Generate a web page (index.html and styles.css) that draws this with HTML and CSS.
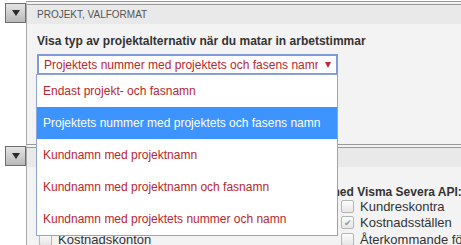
FILE: index.html
```html
<!DOCTYPE html>
<html lang="sv">
	<head>
		<meta charset="UTF-8" />
		<meta name="viewport" content="width=device-width, initial-scale=1.0" />
		<title>Inställningar</title>
		<link rel="stylesheet" href="styles.css">
	</head>
	<body>
		<div class="page">
			<div class="section">
				<div class="gutter">
					<button class="toggle"><span class="toggle-arrow"></span></button>
				</div>
				<div class="panel">
					<div class="panel-header">PROJEKT, VALFORMAT</div>
					<div class="panel-body first">
						<div class="field-label">Visa typ av projektalternativ när du matar in arbetstimmar</div>
						<div class="select-wrap">
							<div class="select">
								<span class="select-text">Projektets nummer med projektets och fasens namn</span>
								<span class="caret"></span>
							</div>
							<ul class="dropdown">
								<li class="option">Endast projekt- och fasnamn</li>
								<li class="option selected">Projektets nummer med projektets och fasens namn</li>
								<li class="option">Kundnamn med projektnamn</li>
								<li class="option">Kundnamn med projektnamn och fasnamn</li>
								<li class="option">Kundnamn med projektets nummer och namn</li>
							</ul>
						</div>
					</div>
				</div>
			</div>
			<div class="section">
				<div class="gutter">
					<button class="toggle"><span class="toggle-arrow"></span></button>
				</div>
				<div class="panel">
					<div class="panel-header">INTEGRATION</div>
					<div class="panel-body second">
						<div class="field-label">Markera vilken information som ska synkroniseras med Visma Severa API:</div>
						<div class="check-grid">
							<label class="check-item"><span class="check"></span>Kunder</label>
							<label class="check-item"><span class="check"></span>Kundreskontra</label>
							<label class="check-item"><span class="check"></span>Produkter</label>
							<label class="check-item"><span class="check checked"></span>Kostnadsställen</label>
							<label class="check-item"><span class="check"></span>Kostnadskonton</label>
							<label class="check-item"><span class="check"></span>Återkommande försäljning</label>
						</div>
					</div>
				</div>
			</div>
		</div>
	</body>
</html>
```

FILE: styles.css
```css
body {
	margin: 0;
	font-family: "Liberation Sans", Arial, sans-serif;
	background: #fff;
	color: #333;
	overflow: hidden;
}

.page {
	padding-top: 1px;
}

.section {
	display: flex;
}

.gutter {
	width: 26px;
	flex-shrink: 0;
	padding-top: 2px;
	background: #fff;
}

.toggle {
	display: flex;
	align-items: center;
	justify-content: center;
	width: 21px;
	height: 20px;
	margin-left: 5px;
	padding: 0;
	border: 1px solid #6d6d6d;
	background: linear-gradient(#e4e4e4, #b9b9b9);
	cursor: pointer;
}

.toggle-arrow {
	width: 0;
	height: 0;
	border-left: 4px solid transparent;
	border-right: 4px solid transparent;
	border-top: 6px solid #2b2b2b;
}

.panel {
	flex: 1;
	min-width: 0;
	border-left: 1px solid #a9a9a9;
	border-top: 4px double #999;
	background: #f3f3f3;
}

.panel-header {
	height: 19px;
	line-height: 19px;
	padding-left: 10px;
	background: #e9e9e9;
	font-size: 10px;
	color: #555;
}

.panel-body {
	padding: 10px 10px 0 10px;
}

.panel-body.first {
	height: 110px;
}

.panel-body.second {
	padding-top: 18px;
}

.field-label {
	font-size: 12px;
	font-weight: bold;
	color: #333;
	white-space: nowrap;
	line-height: 14px;
	margin-bottom: 6px;
}

.second .field-label {
	margin-bottom: 0;
}

.select-wrap {
	position: relative;
	width: 301px;
}

.select {
	display: flex;
	align-items: center;
	height: 17px;
	border: 2px solid #7f9ad6;
	background: #fff;
	padding: 0 5px 0 5px;
}

.select-text {
	flex: 1;
	overflow: hidden;
	white-space: nowrap;
	font-size: 12px;
	color: #b8262e;
}

.caret {
	width: 0;
	height: 0;
	margin-left: 7px;
	border-left: 3px solid transparent;
	border-right: 3px solid transparent;
	border-top: 6px solid #c1272d;
}

.dropdown {
	position: absolute;
	top: 20px;
	left: -1px;
	width: 300px;
	margin: 0;
	padding: 0;
	list-style: none;
	background: #fff;
	border: 1px solid #8ea3d8;
	z-index: 5;
}

.option {
	height: 32px;
	line-height: 32px;
	padding-left: 6px;
	font-size: 12px;
	color: #b8262e;
	white-space: nowrap;
}

.option.selected {
	background: #3d94fe;
	color: #fff;
}

.check-grid {
	display: grid;
	grid-template-columns: 302px 1fr;
	row-gap: 2px;
	padding-left: 2px;
}

.check-item {
	display: flex;
	align-items: center;
	gap: 6px;
	height: 14.5px;
	font-size: 13px;
	color: #333;
	white-space: nowrap;
}

.check {
	display: flex;
	align-items: center;
	justify-content: center;
	width: 11px;
	height: 11px;
	border: 1px solid #b5b5b5;
	border-radius: 2px;
	background: linear-gradient(#fcfcfc, #e6e6e6);
	font-size: 9px;
	color: #9a9a9a;
}

.check.checked::after {
	content: "✔";
}
```
